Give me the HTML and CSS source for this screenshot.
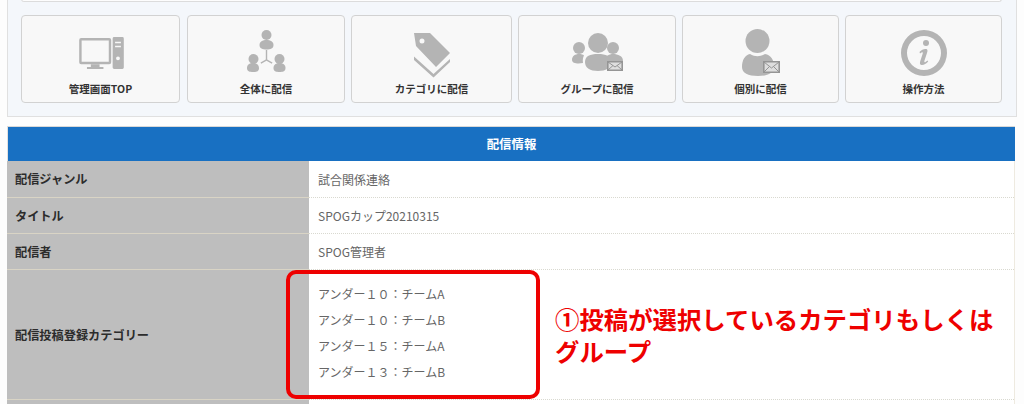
FILE: index.html
```html
<!DOCTYPE html>
<html lang="ja">
<head>
<meta charset="utf-8">
<title>配信情報</title>
<link rel="stylesheet" href="styles.css">
</head>
<body>
<div class="page">
  <section class="panel">
    <div class="topbox"></div>
    <nav class="menu">
      <a class="btn b1">
        <svg class="ico" viewBox="0 0 46 33" width="45" height="32"><path d="M2 1h29a2 2 0 0 1 2 2v23a2 2 0 0 1-2 2H2a2 2 0 0 1-2-2V3a2 2 0 0 1 2-2zM2.500 3.500v22h28v-22z" fill-rule="evenodd"/><path d="M12 28h9v3h4v2H8v-2h4z"/><path d="M34.500 1.500a1.500 1.500 0 0 1 1.500-1.500h8.500a1.500 1.500 0 0 1 1.500 1.500v30a1.500 1.500 0 0 1-1.500 1.500H36a1.500 1.500 0 0 1-1.500-1.500zM37 5v1.500h6V5zM37 9v1.500h6V9zM40 20a2 2 0 1 0 0 4 2 2 0 0 0 0-4z" fill-rule="evenodd"/></svg>
        <span>管理画面TOP</span>
      </a>
      <a class="btn b2">
        <svg class="ico" viewBox="0 0 39 42" width="39" height="42"><circle cx="19.500" cy="5" r="5"/><path d="M12.500 15c0-3.500 3-5 7-5s7 1.500 7 5-3 4.500-7 4.500-7-1-7-4.500z"/><circle cx="6.500" cy="29" r="5"/><path d="M0 38c0-3.500 2.500-5 6-5s6 1.500 6 5-2.500 4-6 4-6-.5-6-4z"/><circle cx="32.500" cy="29" r="5"/><path d="M26.500 38c0-3.500 2.500-5 6-5s6 1.500 6 5-2.500 4-6 4-6-.5-6-4z"/><path d="M18.800 20h1.400v9.600l5.300 3-.7 1.200-5.300-3-5.300 3-.7-1.200 5.300-3z"/></svg>
        <span>全体に配信</span>
      </a>
      <a class="btn b3">
        <svg class="ico" viewBox="0 0 36 45" width="36" height="45"><path d="M0 0h16l20 20-14 14L2 13zM8 5.500a2.500 2.500 0 1 0 0 5 2.500 2.500 0 0 0 0-5z" fill-rule="evenodd"/><path d="M0 23.500L19.500 41 36 26v3L19.500 44.500 0 27z"/></svg>
        <span>カテゴリに配信</span>
      </a>
      <a class="btn b4">
        <svg class="ico" viewBox="0 0 51 39" width="51" height="39"><circle cx="26" cy="10" r="10"/><path d="M13 29c0-6 5-8 13-8s13 2 13 8c0 6-5 9-13 9s-13-3-13-9z"/><circle cx="7" cy="15" r="6"/><path d="M0 27c0-4 3-6 7-6 2.500 0 4 .5 5 1.500-1 2-1.500 4-1 7.500-5 1-11 .5-11-3z"/><circle cx="41" cy="15" r="6"/><path d="M35 23c2-1.500 4-2 6-2 5 0 10 2 10 7H35z"/><path class="env" d="M35.800 28.800h14.400v8.400H35.800z"/><path class="env-line" d="M36 29l7 5 7-5M36 37l5-4.500M50 37l-5-4.500"/></svg>
        <span>グループに配信</span>
      </a>
      <a class="btn b5">
        <svg class="ico" viewBox="0 0 38 47" width="38" height="47"><circle cx="15.500" cy="12" r="12"/><path d="M0 38c0-7 3-12 8-13 5 3 10 3 15 0 6 1 9 6 9 13 0 6-6 9-16 9S0 44 0 38z"/><path class="env" d="M21.800 32.800h15.400v10.400H21.800z"/><path class="env-line" d="M22 33l7.500 6 7.500-6M22 43l5.500-5.500M37 43l-5.500-5.500"/></svg>
        <span>個別に配信</span>
      </a>
      <a class="btn b6">
        <svg class="ico" viewBox="0 0 46 46" width="46" height="46"><path d="M23 0a23 23 0 1 0 0 46 23 23 0 0 0 0-46zM23 6a17 17 0 1 1 0 34 17 17 0 0 1 0-34z" fill-rule="evenodd"/><circle cx="25" cy="13" r="3"/><path d="M18.500 22c2-2.500 5-3.500 7-3 1.500.5 1 2.500.5 4l-2.500 7.500c-.5 1.500 0 2 1 1.500l2-1.500.7 1c-2 2.500-4.700 3.800-6.700 3.500-2-.4-1.700-2.300-1.200-4l2.300-7c.5-1.500 0-2-1-1.500l-1.600 1z"/></svg>
        <span>操作方法</span>
      </a>
    </nav>
  </section>

  <section class="info">
    <h2 class="info-head">配信情報</h2>
    <table class="info-table">
      <tr><th>配信ジャンル</th><td>試合関係連絡</td></tr>
      <tr><th>タイトル</th><td>SPOGカップ20210315</td></tr>
      <tr><th>配信者</th><td>SPOG管理者</td></tr>
      <tr class="cats">
        <th>配信投稿登録カテゴリー</th>
        <td>
          <p>アンダー１０：チームA</p>
          <p>アンダー１０：チームB</p>
          <p>アンダー１５：チームA</p>
          <p>アンダー１３：チームB</p>
        </td>
      </tr>
      <tr><th>&nbsp;</th><td>&nbsp;</td></tr>
    </table>
  </section>

  <div class="mark"></div>
  <p class="note">①投稿が選択しているカテゴリもしくはグループ</p>
</div>
</body>
</html>
```

FILE: styles.css
```css
* { box-sizing: border-box; }
html, body { margin: 0; height: 404px; overflow: hidden; background: #fdfdfd; }
body { font-family: "Noto Sans CJK JP", "Noto Sans", sans-serif; color: #333; }
.page { position: relative; width: 1024px; height: 404px; overflow: hidden; }

.panel {
  margin: -1px 7px 0 7px;
  width: 1010px;
  height: 118px;
  padding: 0 13px;
  background: #f4f7fb;
  border: 1px solid #e0e0e0;
  border-top: 0;
}
.topbox {
  height: 3px;
  width: 981px;
  background: #fdfdfd;
  border: 1px solid #dcdcdc;
  border-top: 0;
  border-radius: 0 0 3px 3px;
}
.menu { display: flex; gap: 6px; margin-top: 13px; width: 981px; }
.btn {
  position: relative;
  display: flex;
  flex-direction: column;
  align-items: center;
  height: 88px;
  background: #f8f8f8;
  border: 1px solid #d2d2d2;
  border-radius: 4px;
  font-size: 10.500px;
  font-weight: 700;
  color: #333;
  line-height: 15px;
}
.btn span { position: absolute; left: 0; right: 0; top: 65px; text-align: center; }
.b1 { width: 159px; margin-right: 1px; }
.b2 { width: 158px; }
.b3 { width: 161px; }
.b4 { width: 158px; }
.b5 { width: 157px; }
.b6 { width: 157px; }
.ico { display: block; fill: #b4b4b4; }
.b1 .ico { margin: 21px 0 0 2px; }
.b2 .ico { margin-top: 14px; }
.b3 .ico { margin-top: 17px; }
.b4 .ico { margin-top: 17px; }
.b5 .ico { margin-top: 13px; }
.b6 .ico { margin-top: 14px; }
.env { fill: #dedede; stroke: #959595; stroke-width: 1.600; }
.env-line { fill: none; stroke: #959595; stroke-width: 1; }

.info { margin: 9px 0 0 7px; width: 1008px; }
.info-head {
  margin: 0;
  height: 35px;
  background: #1870c2;
  border-top: 1px solid #d8d8d8;
  border-left: 1px solid #e0e0e0;
  color: #fff;
  font-size: 12.400px;
  font-weight: 700;
  line-height: 35px;
  text-align: center;
}
.info-table { width: 100%; border-collapse: collapse; table-layout: fixed; font-size: 12px; }
.info-table th {
  width: 302px;
  height: 36px;
  padding: 1px 8px 0;
  background: #bebebe;
  border-bottom: 1px solid #d9d4c5;
  text-align: left;
  font-size: 12.200px;
  font-weight: 700;
  color: #2c2c2c;
}
.info-table td {
  padding: 1px 9px 0;
  background: #fff;
  border-bottom: 1px dotted #d9d9d0;
  border-right: 1px solid #eeeae0;
  color: #666;
}
.cats th, .cats td { height: 130px; }
.info-table .cats td { padding-top: 0; padding-bottom: 3px; }
.cats p { margin: 0; line-height: 26px; }

.mark {
  position: absolute;
  left: 286px;
  top: 270px;
  width: 254px;
  height: 129px;
  border: 4px solid #ee0000;
  border-radius: 10px;
}
.note {
  position: absolute;
  left: 555px;
  top: 303px;
  width: 445px;
  margin: 0;
  font-size: 24.400px;
  font-weight: 700;
  line-height: 32px;
  color: #ee0000;
}
```
